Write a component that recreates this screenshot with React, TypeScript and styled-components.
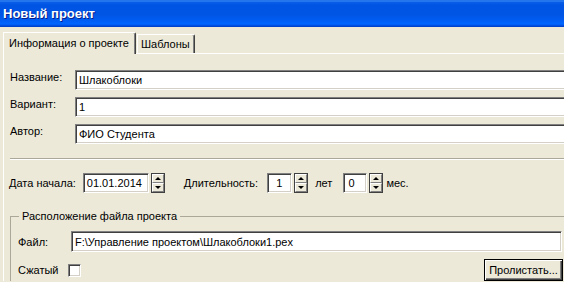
import styled, { createGlobalStyle } from 'styled-components';

const GlobalStyle = createGlobalStyle`
  html, body {
    margin: 0;
    padding: 0;
    background: #ece9d8;
  }
  body {
    font-family: "Liberation Sans", Arial, sans-serif;
    font-size: 11px;
    color: #000;
  }
`;

const Window = styled.div`
  width: 564px;
  height: 282px;
  overflow: hidden;
  display: flex;
  flex-direction: column;
  background: #ece9d8;
`;

const TitleBar = styled.div`
  flex: 0 0 27px;
  display: flex;
  align-items: center;
  padding: 0 0 0 3px;
  color: #fff;
  font-size: 13px;
  font-weight: bold;
  text-shadow: 1px 1px 0 #0a1f8a;
  background: linear-gradient(
    to bottom,
    #0a5fdf 0,
    #3d8cf7 1px,
    #0a5fe8 2px,
    #0054e3 5px,
    #0055e5 15px,
    #005ef5 21px,
    #0066ff 24px,
    #0048d8 26px,
    #003cc0 27px
  );
`;

const Body = styled.div`
  flex: 1;
  padding: 5px 0 0 3px;
  width: 640px;
`;

const TabStrip = styled.div`
  display: flex;
  align-items: flex-end;
  height: 21px;
`;

const Tab = styled.div<{ $active?: boolean; $width: number }>`
  position: relative;
  z-index: ${({ $active }) => ($active ? 1 : 0)};
  box-sizing: border-box;
  width: ${({ $width }) => $width}px;
  height: ${({ $active }) => ($active ? 22 : 19)}px;
  margin-bottom: ${({ $active }) => ($active ? -1 : 0)}px;
  margin-left: ${({ $active }) => ($active ? 0 : 1)}px;
  padding: ${({ $active }) => ($active ? '3px 0 0 5px' : '2px 0 0 3px')};
  background: #ece9d8;
  border-top: 1px solid #fff;
  border-left: 1px solid #fff;
  border-right: 1px solid #404040;
  border-top-right-radius: 2px;
  box-shadow: inset -1px 0 0 #808080;
  line-height: 14px;
  white-space: nowrap;
`;

const Panel = styled.div`
  border-top: 1px solid #fff;
  border-left: 1px solid #fff;
  padding: 16px 0 0 6px;
`;

const Fields = styled.div`
  display: flex;
  flex-direction: column;
  gap: 7px;
`;

const FieldRow = styled.div`
  display: flex;
  align-items: flex-start;
`;

const Label = styled.span<{ $width?: number }>`
  flex: 0 0 ${({ $width }) => ($width ? `${$width}px` : 'auto')};
  line-height: 14px;
  white-space: nowrap;
`;

const TextBox = styled.div<{ $width?: number; $height?: number; $pad?: number }>`
  box-sizing: border-box;
  ${({ $width }) => ($width ? `width: ${$width}px; flex: 0 0 ${$width}px;` : 'flex: 1;')}
  height: ${({ $height }) => $height ?? 20}px;
  padding: 0 0 0 ${({ $pad }) => $pad ?? 3}px;
  display: flex;
  align-items: center;
  background: #fff;
  border-top: 1px solid #808080;
  border-left: 1px solid #808080;
  border-bottom: 1px solid #fff;
  border-right: 1px solid #fff;
  box-shadow: inset 1px 1px 0 #404040, inset -1px -1px 0 #d4d0c8;
  white-space: nowrap;
  overflow: hidden;
`;

const Separator = styled.div`
  margin: 14px 0 0 0;
  border-top: 1px solid #aca899;
  border-bottom: 1px solid #fff;
`;

const DateRow = styled.div`
  display: flex;
  align-items: center;
  height: 20px;
  margin: 13px 0 0 -1px;
`;

const Gap = styled.span<{ $w: number }>`
  flex: 0 0 ${({ $w }) => $w}px;
`;

const Spin = styled.div`
  box-sizing: border-box;
  flex: 0 0 14px;
  height: 20px;
  display: flex;
  flex-direction: column;
  border: 1px solid #404040;
  background: #ece9d8;
`;

const SpinButton = styled.div`
  flex: 1;
  display: flex;
  align-items: center;
  justify-content: center;
  border-top: 1px solid #fff;
  border-left: 1px solid #fff;
  border-bottom: 1px solid #808080;
  border-right: 1px solid #808080;
`;

const Arrow = styled.span<{ $down?: boolean }>`
  width: 0;
  height: 0;
  border-left: 3px solid transparent;
  border-right: 3px solid transparent;
  ${({ $down }) =>
    $down ? 'border-top: 3px solid #000;' : 'border-bottom: 3px solid #000;'}
`;

const GroupBox = styled.fieldset`
  margin: 16px 0 0 0;
  padding: 8px 0 0 7px;
  border: none;
  border-top: 1px solid #aca899;
  border-left: 1px solid #aca899;
  min-width: 0;
`;

const Legend = styled.legend`
  margin-left: 1px;
  padding: 0 3px;
  line-height: 14px;
`;

const GroupRow = styled.div<{ $mt?: number }>`
  display: flex;
  align-items: center;
  width: 545px;
  margin-top: ${({ $mt }) => $mt ?? 0}px;
`;

const CheckBox = styled.span`
  box-sizing: border-box;
  width: 13px;
  height: 13px;
  margin-left: 9px;
  background: #fff;
  border-top: 1px solid #808080;
  border-left: 1px solid #808080;
  border-bottom: 1px solid #fff;
  border-right: 1px solid #fff;
  box-shadow: inset 1px 1px 0 #404040, inset -1px -1px 0 #d4d0c8;
`;

const Button = styled.button`
  box-sizing: border-box;
  margin-left: auto;
  width: 79px;
  height: 22px;
  padding: 0;
  font: inherit;
  color: #000;
  background: #ece9d8;
  border: 1px solid #000;
  box-shadow: inset 1px 1px 0 #fff, inset -1px -1px 0 #404040,
    inset -2px -2px 0 #808080;
  border-radius: 0;
`;

const Spinner = () => (
  <Spin>
    <SpinButton>
      <Arrow />
    </SpinButton>
    <SpinButton>
      <Arrow $down />
    </SpinButton>
  </Spin>
);

const fields = [
  { label: 'Название:', value: 'Шлакоблоки' },
  { label: 'Вариант:', value: '1' },
  { label: 'Автор:', value: 'ФИО Студента' }
];

export default function App() {
  return (
    <>
      <GlobalStyle />
      <Window>
        <TitleBar>Новый проект</TitleBar>
        <Body>
          <TabStrip>
            <Tab $active $width={133}>
              Информация о проекте
            </Tab>
            <Tab $width={58}>Шаблоны</Tab>
          </TabStrip>
          <Panel>
            <Fields>
              {fields.map((f) => (
                <FieldRow key={f.label}>
                  <Label $width={65}>{f.label}</Label>
                  <TextBox>{f.value}</TextBox>
                </FieldRow>
              ))}
            </Fields>

            <Separator />

            <DateRow>
              <Label>Дата начала:</Label>
              <Gap $w={7} />
              <TextBox $width={66}>01.01.2014</TextBox>
              <Gap $w={2} />
              <Spinner />
              <Gap $w={19} />
              <Label>Длительность:</Label>
              <Gap $w={9} />
              <TextBox $width={25} $pad={8}>
                1
              </TextBox>
              <Gap $w={2} />
              <Spinner />
              <Gap $w={7} />
              <Label>лет</Label>
              <Gap $w={11} />
              <TextBox $width={24} $pad={4}>
                0
              </TextBox>
              <Gap $w={2} />
              <Spinner />
              <Gap $w={3} />
              <Label>мес.</Label>
            </DateRow>

            <GroupBox>
              <Legend>Расположение файла проекта</Legend>
              <GroupRow>
                <Label $width={53}>Файл:</Label>
                <TextBox $width={491} $height={21}>
                  F:\Управление проектом\Шлакоблоки1.pex
                </TextBox>
              </GroupRow>
              <GroupRow $mt={7}>
                <Label>Сжатый</Label>
                <CheckBox />
                <Button>Пролистать...</Button>
              </GroupRow>
            </GroupBox>
          </Panel>
        </Body>
      </Window>
    </>
  );
}
